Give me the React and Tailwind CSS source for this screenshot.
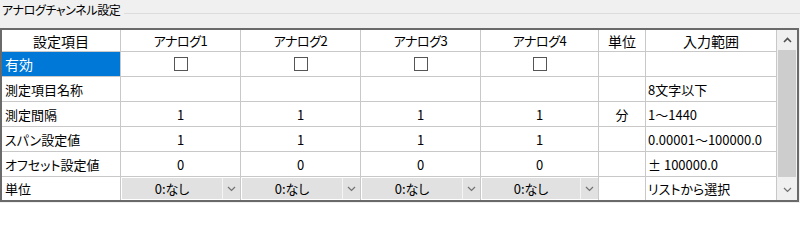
import React from 'react';

const cols = ['アナログ1', 'アナログ2', 'アナログ3', 'アナログ4'];

const rows = [
  { label: '有効', type: 'check', unit: '', range: '' },
  { label: '測定項目名称', type: 'text', values: ['', '', '', ''], unit: '', range: '8文字以下' },
  { label: '測定間隔', type: 'text', values: ['1', '1', '1', '1'], unit: '分', range: '1～1440' },
  { label: 'スパン設定値', type: 'text', values: ['1', '1', '1', '1'], unit: '', range: '0.00001～100000.0' },
  { label: 'オフセット設定値', type: 'text', values: ['0', '0', '0', '0'], unit: '', range: '± 100000.0' },
];

function Chevron({ dir = 'down' }) {
  return (
    <svg width="9" height="6" viewBox="0 0 9 6" className="block">
      {dir === 'down' ? (
        <polyline points="1,1 4.5,4.5 8,1" fill="none" stroke="#707070" strokeWidth="1.2" />
      ) : (
        <polyline points="1,5 4.5,1.5 8,5" fill="none" stroke="#505050" strokeWidth="1.6" />
      )}
    </svg>
  );
}

function Combo() {
  return (
    <div className="h-full bg-white pl-px py-px">
      <div className="flex h-full bg-[#e1e1e1]">
        <div className="flex-1 flex items-center justify-center">0:なし</div>
        <div className="w-px bg-[#f4f4f4]" />
        <div className="w-[17px] flex items-center justify-center">
          <Chevron />
        </div>
      </div>
    </div>
  );
}

export default function App() {
  const cell = 'border-r border-b border-[#c8c8c8] bg-white flex items-center';
  const lastCell = 'border-r border-[#c8c8c8] bg-white flex items-center';

  return (
    <div className="w-[800px] h-[203px] bg-[#f0f0f0] text-[13px] leading-none text-black font-['Noto_Sans_CJK_JP','Noto_Sans',sans-serif] [font-feature-settings:'palt']">
      <div className="h-[28px] flex items-start">
        <div className="flex items-center h-[20px] w-full">
          <span className="pl-[2px] pr-[4px] text-[12px] tracking-[-0.4px] whitespace-nowrap">アナログチャンネル設定</span>
          <div className="flex-1 h-px bg-[#dcdcdc] mt-[6px]" />
        </div>
      </div>

      <div className="w-[799px] h-[174px] border-2 border-[#6a6a6a] flex">
        <div className="grid grid-cols-[119px_120px_120px_120px_118px_47px_131px] grid-rows-[22px_repeat(5,25px)_23px]">
          <div className={`${cell} justify-center text-[14px]`}>設定項目</div>
          {cols.map((c) => (
            <div key={c} className={`${cell} justify-center tracking-[-0.5px]`}>{c}</div>
          ))}
          <div className={`${cell} justify-center text-[14px]`}>単位</div>
          <div className={`${cell} justify-center text-[14px]`}>入力範囲</div>

          {rows.map((r) => (
            <React.Fragment key={r.label}>
              {r.type === 'check' ? (
                <div className="border-r border-b border-[#c8c8c8] bg-[#0078d7] text-white flex items-center pl-[3px] text-[14px]">
                  {r.label}
                </div>
              ) : (
                <div className={`${cell} pl-[3px] whitespace-nowrap`}>{r.label}</div>
              )}
              {r.type === 'check'
                ? cols.map((c) => (
                    <div key={c} className={`${cell} justify-center`}>
                      <div className="w-[14px] h-[14px] border-[1.5px] border-[#555]" />
                    </div>
                  ))
                : r.values.map((v, i) => (
                    <div key={i} className={`${cell} justify-center`}>{v}</div>
                  ))}
              <div className={`${cell} justify-center`}>{r.unit}</div>
              <div className={`${cell} pl-[2px] whitespace-nowrap`}>{r.range}</div>
            </React.Fragment>
          ))}

          <div className={`${lastCell} pl-[3px]`}>単位</div>
          {cols.map((c) => (
            <div key={c} className="border-r border-[#c8c8c8] bg-white">
              <Combo />
            </div>
          ))}
          <div className={lastCell} />
          <div className={`${lastCell} pl-[2px] whitespace-nowrap`}>リストから選択</div>
        </div>

        <div className="w-[20px] flex flex-col bg-[#f0f0f0]">
          <div className="h-[20px] flex items-center justify-center">
            <Chevron dir="up" />
          </div>
          <div className="h-[127px] mx-px bg-[#cdcdcd]" />
          <div className="flex-1" />
          <div className="h-[20px] flex items-center justify-center">
            <Chevron />
          </div>
        </div>
      </div>
    </div>
  );
}
